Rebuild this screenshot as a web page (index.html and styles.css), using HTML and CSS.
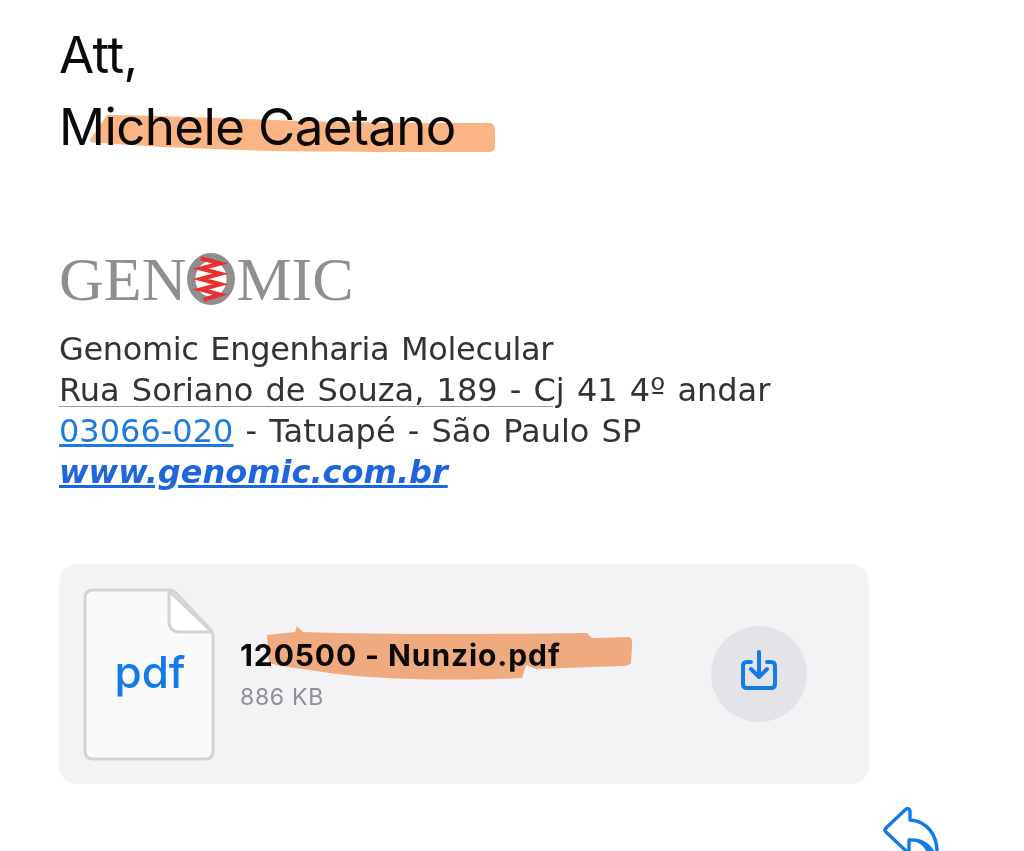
FILE: index.html

```html
<!DOCTYPE html>
<html lang="pt-BR">
<head>
  <meta charset="UTF-8">
  <meta name="viewport" content="width=device-width, initial-scale=1.0">
  <title>Att, Michele Caetano</title>
  <link rel="stylesheet" href="styles.css">
</head>
<body>
  <div class="saudacao">
    <div>Att,</div>
    <div><span class="marcado">Michele Caetano
      <svg class="risco risco-nome" viewBox="0 0 406 38" aria-hidden="true">
        <path d="M0 25 L17 0 C80 1 130 3 183 5 C260 8 340 8 400 8 Q405 9 405 15 V32 Q405 37 398 37 C300 37 200 37 150 35 C90 33 30 30 0 27Z"/>
      </svg>
    </span></div>
  </div>

  <div class="logo">
    <span>GEN</span>
    <svg class="logo-o" viewBox="0 0 48 50" aria-hidden="true">
      <ellipse cx="24" cy="25" rx="19" ry="21" fill="none" stroke="#8f8f8f" stroke-width="8"/>
      <path d="M14 5 L33 10 L14 15 L33 20 L14 25 L33 30 L14 35 L33 40 L17 45" fill="none" stroke="#ea2f2f" stroke-width="4"/>
    </svg>
    <span>MIC</span>
  </div>

  <div class="endereco">
    <div class="linha-nome">Genomic Engenharia Molecular</div>
    <div class="linha-rua">Rua Soriano de Souza, 189 - Cj 41 4º andar</div>
    <div><a href="#" class="link">03066-020</a> - Tatuapé - São Paulo SP</div>
    <div><a href="#" class="link site">www.genomic.com.br</a></div>
  </div>

  <div class="anexo">
    <svg class="arquivo" viewBox="0 0 132 173" aria-hidden="true">
      <path d="M10 2 H86 Q90 2 93 5 L127 41 Q130 44 130 48 V163 Q130 171 122 171 H10 Q2 171 2 163 V10 Q2 2 10 2Z" fill="#fafafb" stroke="#d3d3d6" stroke-width="3"/>
      <path d="M86 3 V33 Q86 44 97 44 H129 Z" fill="#fff" stroke="#d3d3d6" stroke-width="3" stroke-linejoin="round"/>
      <text x="67" y="100" text-anchor="middle" class="arquivo-tipo">pdf</text>
    </svg>
    <div class="anexo-info">
      <div class="anexo-nome"><span class="marcado">120500 - Nunzio.pdf
        <svg class="risco risco-arquivo" viewBox="0 0 366 56" aria-hidden="true">
          <path d="M0 9 L28 6 L30 0 L36 6 C120 9 250 8 320 7 L325 12 L362 11 Q366 12 365 20 L364 37 Q362 40 356 40 L269 43 L259 39 L255 52 C200 55 110 54 62 47 C30 42 10 40 2 37Z"/>
        </svg>
      </span></div>
      <div class="anexo-tam">886 KB</div>
    </div>
    <button class="baixar" aria-label="Baixar">
      <svg viewBox="0 0 36 40" width="36" height="40" fill="none" stroke="#127be8" stroke-width="4" stroke-linecap="round" stroke-linejoin="round">
        <path d="M10 12 H6 Q2 12 2 16 V34 Q2 38 6 38 H30 Q34 38 34 34 V16 Q34 12 30 12 H26"/>
        <path d="M18 2 V27 M10 19 L18 27 L26 19"/>
      </svg>
    </button>
  </div>

  <div class="acoes">
    <svg class="responder" viewBox="0 0 56 56" aria-hidden="true">
      <path d="M26 2 Q24 1 22 3 L3 21 Q1 23 3 25 L22 43 Q24 45 26 43 V33 C38 32 47 38 52 49 L54 48 C55 28 44 14 27 13 V4 Z M26 33 C38 32 46 40 48 54" fill="none" stroke="#127be8" stroke-width="3.400" stroke-linejoin="round"/>
    </svg>
  </div>
</body>
</html>
```

FILE: styles.css

```css
html, body {
  margin: 0;
  height: 851px;
  overflow: hidden;
}
body {
  padding: 19px 155px 0 59px;
  background: #fff;
  box-sizing: border-box;
  font-family: Inter, "Liberation Sans", sans-serif;
}
.saudacao {
  font-size: 51px;
  line-height: 72px;
  letter-spacing: -0.6px;
  color: #0b0b0b;
}
.marcado {
  position: relative;
  display: inline-block;
}
.risco {
  position: absolute;
  mix-blend-mode: multiply;
}
.risco path {
  fill: #fbb484;
}
.risco-nome {
  left: 31px;
  top: 24px;
  width: 406px;
  height: 38px;
}
.risco-arquivo {
  left: 27px;
  top: -11px;
  width: 366px;
  height: 56px;
}
.logo {
  display: flex;
  align-items: center;
  margin-top: 88px;
  height: 56px;
  font-family: "Liberation Serif", serif;
  font-size: 62px;
  line-height: 56px;
  color: #8f8f8f;
  filter: blur(0.6px);
}
.logo-o {
  width: 50px;
  height: 52px;
  flex: none;
}
.endereco {
  margin-top: 22px;
  font-family: "DejaVu Sans", sans-serif;
  font-size: 32px;
  line-height: 41px;
  word-spacing: 2px;
  color: #333;
}
.linha-nome {
  letter-spacing: -0.35px;
}
.linha-rua {
  position: relative;
}
/* the underline stops halfway through the line in the original mail */
.linha-rua::after {
  content: "";
  position: absolute;
  left: 0;
  top: 36px;
  width: 494px;
  height: 1px;
  background: #9a9a9a;
}
.link {
  color: #1f7ae0;
}
.site {
  color: #1f66dc;
  font-weight: bold;
  font-style: italic;
}
.anexo {
  display: flex;
  align-items: center;
  height: 220px;
  margin-top: 71px;
  padding: 0 62px 0 24px;
  background: #f3f3f6;
  border-radius: 18px;
}
.arquivo {
  width: 132px;
  height: 173px;
  flex: none;
}
.arquivo-tipo {
  font-family: Inter, "Liberation Sans", sans-serif;
  font-size: 44px;
  font-weight: 500;
  fill: #127be8;
}
.anexo-info {
  flex: 1;
  margin-left: 25px;
}
.anexo-nome {
  font-size: 30px;
  font-weight: 700;
  line-height: 36px;
  letter-spacing: 0.9px;
  color: #0b0b0b;
}
.anexo-tam {
  margin-top: 10px;
  font-size: 23px;
  line-height: 28px;
  letter-spacing: 0.7px;
  color: #8e8e93;
}
.baixar {
  display: flex;
  align-items: center;
  justify-content: center;
  width: 96px;
  height: 96px;
  padding: 0 0 8px;
  border: none;
  border-radius: 50%;
  background: #e4e4e8;
}
.acoes {
  display: flex;
  justify-content: flex-end;
  margin-top: 23px;
  margin-right: -70px;
}
.responder {
  width: 56px;
  height: 56px;
}
```
